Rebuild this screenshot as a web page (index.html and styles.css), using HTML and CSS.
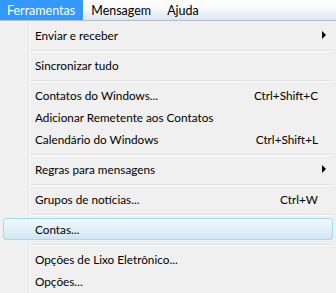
FILE: index.html
```html
<!DOCTYPE html>
<html>
<head>
<meta charset="utf-8">
<link rel="stylesheet" href="styles.css">
</head>
<body>
<div class="menubar">
  <span class="top active">Ferramentas</span>
  <span class="top">Mensagem</span>
  <span class="top">Ajuda</span>
</div>
<div class="menu">
  <div class="item"><span class="label">Enviar e receber</span><span class="arrow"></span></div>
  <div class="sep"></div>
  <div class="item"><span class="label">Sincronizar tudo</span></div>
  <div class="sep"></div>
  <div class="item"><span class="label">Contatos do Windows...</span><span class="key">Ctrl+Shift+C</span></div>
  <div class="item"><span class="label">Adicionar Remetente aos Contatos</span></div>
  <div class="item"><span class="label">Calendário do Windows</span><span class="key">Ctrl+Shift+L</span></div>
  <div class="sep"></div>
  <div class="item"><span class="label">Regras para mensagens</span><span class="arrow"></span></div>
  <div class="sep"></div>
  <div class="item"><span class="label">Grupos de notícias...</span><span class="key">Ctrl+W</span></div>
  <div class="sep"></div>
  <div class="item hot"><span class="label">Contas...</span></div>
  <div class="sep"></div>
  <div class="item"><span class="label">Opções de Lixo Eletrônico...</span></div>
  <div class="item"><span class="label">Opções...</span></div>
</div>
</body>
</html>
```
FILE: styles.css
```css
html, body {
  margin: 0;
  padding: 0;
  background: #f0f0f0;
  font-family: Lato, "Open Sans", sans-serif;
  font-size: 11.75px;
  color: #000;
}
.menubar {
  height: 20px;
  display: flex;
  align-items: stretch;
  font-size: 12.5px;
  background: linear-gradient(#ffffff, #f7f9fc 45%, #dce5f1);
  border-bottom: 1px solid #b6bcc6;
}
.top {
  display: flex;
  align-items: center;
  padding: 0 8px;
}
.top.active {
  background: #3399ff;
  color: #fff;
  padding: 0 8px 0 7px;
}
.menu {
  padding: 3px 3px 1px;
  background: linear-gradient(90deg, #f1f1f1 0, #f1f1f1 28px, #e2e3e3 28px, #e2e3e3 29px, #ffffff 29px, #ffffff 30px, #f0f0f0 30px);
}
.item {
  box-sizing: border-box;
  height: 22px;
  display: flex;
  align-items: center;
  padding: 0 6px 0 31px;
  border: 1px solid transparent;
  border-radius: 3px;
}
.label { flex: 1; white-space: nowrap; }
.key { white-space: nowrap; padding-right: 8px; }
.arrow {
  width: 0; height: 0;
  border-top: 4px solid transparent;
  border-bottom: 4px solid transparent;
  border-left: 4px solid #000;
}
.sep {
  height: 8px;
  margin-left: 27px;
  background: linear-gradient(#f0f0f0 0, #f0f0f0 4px, #e0e0e0 4px, #e0e0e0 5px, #ffffff 5px, #ffffff 6px, #f0f0f0 6px);
}
.item.hot {
  border-color: #a8d8eb;
  background: linear-gradient(#f1f8fb, #e3f1f8 50%, #cfe7f2);
}
```
